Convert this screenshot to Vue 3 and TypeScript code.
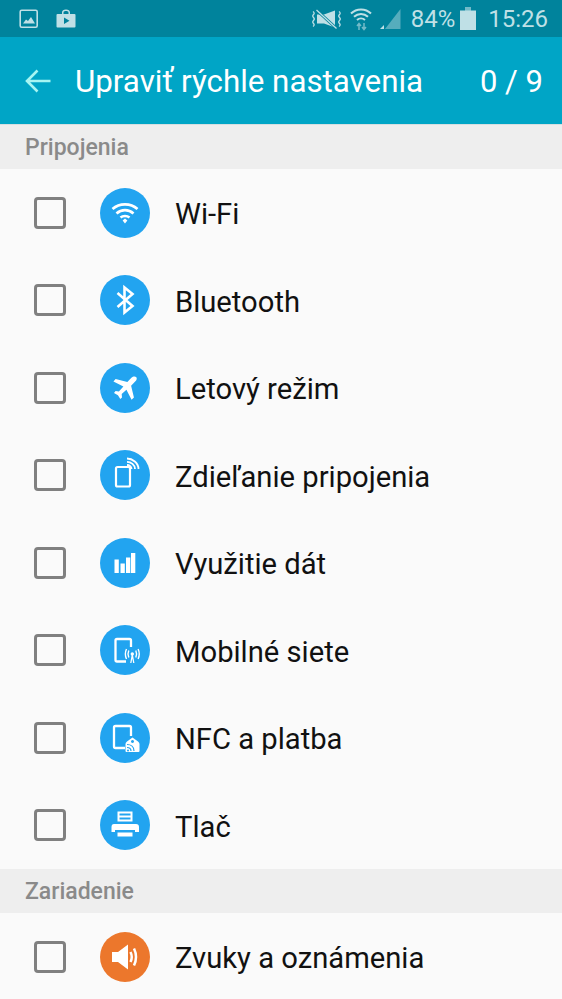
<script setup lang="ts">
interface Row {
  label: string
  icon: string
  orange?: boolean
}

const connections: Row[] = [
  { label: 'Wi-Fi', icon: 'wifi' },
  { label: 'Bluetooth', icon: 'bluetooth' },
  { label: 'Letový režim', icon: 'plane' },
  { label: 'Zdieľanie pripojenia', icon: 'share' },
  { label: 'Využitie dát', icon: 'data' },
  { label: 'Mobilné siete', icon: 'mobile' },
  { label: 'NFC a platba', icon: 'nfc' },
  { label: 'Tlač', icon: 'print' },
]

const device: Row[] = [{ label: 'Zvuky a oznámenia', icon: 'sound', orange: true }]

const sections = [
  { title: 'Pripojenia', rows: connections },
  { title: 'Zariadenie', rows: device },
]
</script>

<template>
  <div class="screen">
    <div class="status-bar">
      <div class="status-left">
        <svg class="st-icon" width="20" height="20" viewBox="0 0 20 20">
          <rect x="1.2" y="1.2" width="17" height="17" rx="1.5" fill="none" stroke="currentColor" stroke-width="1.6" />
          <path d="M4 14.5 L7 10.5 L9 12 L12 8 L16 14.5 Z" fill="currentColor" />
        </svg>
        <svg class="st-icon" width="20" height="20" viewBox="0 0 20 20">
          <path fill-rule="evenodd" d="M1.5 5 H6 V3.5 C6 1.5 7.5 .5 10 .5 C12.500 .5 14 1.500 14 3.500 V5 H18.500 Q19.500 5 19.500 6 V17.500 Q19.500 18.500 18.500 18.500 H1.500 Q.5 18.500 .5 17.500 V6 Q.5 5 1.500 5 Z M7.500 5 H12.500 V3.500 C12.500 2.500 11.500 2 10 2 C8.500 2 7.500 2.500 7.500 3.500 Z M8 8.500 V15 L13.500 11.700 Z" fill="currentColor" />
        </svg>
      </div>
      <div class="status-right">
        <svg class="st-mute" width="30" height="22" viewBox="0 0 30 22">
          <path d="M6 6.500 H13 L24 2.500 V19.500 L13 15.500 H6 Z" fill="currentColor" />
          <path d="M6 2.500 L25 20" stroke="#00839c" stroke-width="3" />
          <path d="M5.500 2 L25.500 20.500" stroke="currentColor" stroke-width="1.300" />
          <path d="M2 3.500 Q4 5 2.500 6.500 Q1 8 2.500 9.500 Q4 11 2.500 12.500 Q1 14 2.500 15.500 Q4 17 2 18.500 M28 3.500 Q30 5 28.500 6.500 Q27 8 28.500 9.500 Q30 11 28.500 12.500 Q27 14 28.500 15.500 Q30 17 28 18.500" fill="none" stroke="currentColor" stroke-width="1.300" />
        </svg>
        <svg class="st-wifi" width="22" height="24" viewBox="0 0 22 24">
          <path d="M1 6.500 C6.500 1 15.500 1 21 6.500 M4 9.800 C8 6 14 6 18 9.800 M7 13 C9.300 11 12.700 11 15 13" fill="none" stroke="currentColor" stroke-width="2" />
          <path d="M9 23 V17 M7 19 L9 16.500 L11 19 M14 16 V22 M12 20 L14 22.500 L16 20" fill="none" stroke="currentColor" stroke-width="1.500" opacity=".6" />
        </svg>
        <svg class="st-signal" width="21" height="22" viewBox="0 0 21 22">
          <path d="M20.500 1 V21 H5 Z" fill="currentColor" opacity=".45" />
          <path d="M0 21 L4 17 V21 Z" fill="currentColor" />
        </svg>
        <span class="st-pct">84%</span>
        <svg class="st-batt" width="16" height="23" viewBox="0 0 16 23">
          <path d="M5 0 H11 V4 H5 Z" fill="currentColor" opacity=".6" />
          <rect y="3.500" width="16" height="19.500" fill="currentColor" />
        </svg>
        <span class="st-time">15:26</span>
      </div>
    </div>

    <header class="app-bar">
      <svg class="back" width="26" height="26" viewBox="0 0 26 26">
        <path d="M25.500 13 H2.500 M12.500 2.500 L2 13 L12.500 23.500" fill="none" stroke="currentColor" stroke-width="2.600" />
      </svg>
      <h1 class="title">Upraviť rýchle nastavenia</h1>
      <span class="count">0 / 9</span>
    </header>

    <section v-for="section in sections" :key="section.title">
      <h2 class="sec-title">{{ section.title }}</h2>
      <div v-for="row in section.rows" :key="row.label" class="row">
        <span class="check" />
        <span class="badge" :class="{ orange: row.orange }">
          <svg width="50" height="50" viewBox="0 0 50 50">
            <g v-if="row.icon === 'wifi'">
              <path d="M12.500 21 C19.500 14.700 30.500 14.700 37.500 21 M16.500 25.500 C21.500 21 28.500 21 33.500 25.500 M20.500 29.500 C23 27.500 27 27.500 29.500 29.500" fill="none" stroke="#fff" stroke-width="2.700" />
              <path d="M22.600 32.500 L25 30.500 L27.400 32.500 L25 35.500 Z" fill="#fff" />
            </g>
            <path v-else-if="row.icon === 'bluetooth'" d="M17.500 18 L32.500 31 L24.500 37.500 V12.500 L32.500 19 L17.500 32" fill="none" stroke="#fff" stroke-width="2.600" />
            <path v-else-if="row.icon === 'plane'" transform="translate(25 25) scale(.94) translate(-25 -25)" d="M37 13.500 C38 14.500 37.500 16.500 35.800 18.200 L31.500 22.500 L34.500 35 L32 37.500 L26.500 26.800 L21.500 31.500 L21.800 35 L20 36.800 L17.500 32.700 L13.300 30.200 L15 28.300 L18.500 28.700 L23.300 23.500 L12.700 18 L15 15.500 L27.500 18.500 L31.800 14.200 C33.500 12.500 36 12.500 37 13.500 Z" fill="#fff" />
            <g v-else-if="row.icon === 'share'">
              <rect x="16" y="17" width="14" height="19.500" rx="1.500" fill="none" stroke="#fff" stroke-width="2.200" />
              <path d="M27 8.500 C32.500 8.500 38.500 13 38.500 19 M27 11.800 C31 11.800 35 15 35 19 M27 15 C29.500 15 31.500 17 31.500 19" fill="none" stroke="#fff" stroke-width="1.800" />
            </g>
            <g v-else-if="row.icon === 'data'" fill="#fff">
              <rect x="14.500" y="21.500" width="4.300" height="13.500" />
              <rect x="20.500" y="25.500" width="4.300" height="9.500" />
              <rect x="26" y="19.500" width="4.300" height="15.500" />
              <rect x="31" y="15" width="4.300" height="20" />
            </g>
            <g v-else-if="row.icon === 'mobile'">
              <path d="M26 36.500 H17 Q15.500 36.500 15.500 35 V15.500 Q15.500 14 17 14 H29.500 Q31 14 31 15.500 V22" fill="none" stroke="#fff" stroke-width="2.300" />
              <circle cx="32.300" cy="29" r="1.700" fill="#fff" />
              <path d="M32.300 30 L30.800 38 M32.300 30 L33.800 38" stroke="#fff" stroke-width="1.300" />
              <path d="M28.800 25.500 Q27.200 29 28.800 32.500 M35.800 25.500 Q37.400 29 35.800 32.500 M26.500 24 Q24.200 29 26.500 34 M38.100 24 Q40.400 29 38.100 34" fill="none" stroke="#fff" stroke-width="1.400" />
            </g>
            <g v-else-if="row.icon === 'nfc'">
              <path d="M25 35 H15.500 Q14 35 14 33.500 V14.500 Q14 13 15.500 13 H29.500 Q31 13 31 14.500 V23" fill="none" stroke="#fff" stroke-width="2.300" />
              <path fill-rule="evenodd" d="M32.500 24.500 L38 28.500 Q39.500 29.500 39.500 31 V38 Q39.500 39 38.500 39 H26.500 Q25.500 39 25.500 38 V31 Q25.500 29.500 27 28.500 Z M32.500 27 A1.500 1.500 0 1 0 32.510 27 Z" fill="#fff" />
              <path d="M27 31.500 C31 31.500 34 34 34 38 M27 34.500 C29.500 34.500 31 36 31 38" fill="none" stroke="#22a4f0" stroke-width="1.200" />
              <circle cx="28" cy="37.500" r="1" fill="#22a4f0" />
            </g>
            <g v-else-if="row.icon === 'print'" fill="#fff">
              <path fill-rule="evenodd" d="M17.500 11.500 H32.500 V21.500 H17.500 Z M19.500 13.500 V15.500 H30.500 V13.500 Z M19.500 17.500 V19.500 H30.500 V17.500 Z" />
              <path d="M14 24 H36 Q39 24 39 27 V32 H35 V30 H15 V32 H11.500 V27 Q11.500 24 14 24 Z" />
              <rect x="17.500" y="32.500" width="15" height="4" />
            </g>
            <g v-else-if="row.icon === 'sound'">
              <path d="M12 20 H18 L28 12.500 V37.500 L18 30 H12 Z" fill="#fff" />
              <path d="M30.500 20 Q33 25 30.500 30" fill="none" stroke="#fff" stroke-width="2.500" />
              <path d="M34 16.500 Q38 25 34 33.500" fill="none" stroke="#fff" stroke-width="2.500" />
            </g>
          </svg>
        </span>
        <span class="label">{{ row.label }}</span>
      </div>
    </section>
  </div>
</template>

<style scoped>
.screen {
  width: 562px;
  height: 999px;
  overflow: hidden;
  background: #fafafa;
  font-family: Roboto, "Liberation Sans", sans-serif;
}

.status-bar {
  height: 37px;
  display: flex;
  justify-content: space-between;
  align-items: center;
  padding: 0 14px 0 19px;
  background: #00839c;
  color: #bfe0e6;
}

.status-left {
  display: flex;
  align-items: center;
  gap: 17px;
}

.status-right {
  display: flex;
  align-items: center;
}

.st-icon,
.st-mute,
.st-wifi,
.st-signal,
.st-batt {
  display: block;
  flex: none;
}

.st-wifi {
  margin-left: 9px;
}

.st-signal {
  margin-left: 8px;
}

.st-pct {
  margin-left: 10px;
  font-size: 24px;
}

.st-batt {
  margin-left: 5px;
}

.st-time {
  margin-left: 12px;
  font-size: 24px;
}

.app-bar {
  height: 88px;
  box-sizing: border-box;
  display: flex;
  align-items: center;
  padding: 0 19px 0 25px;
  background: #00a5c6;
  color: #fff;
  border-bottom: 1px solid #d6dfe1;
}

.back {
  flex: none;
  color: #a6f5f2;
}

.title {
  margin: 0 0 0 24px;
  padding-top: 2px;
  flex: 1;
  font-size: 31.3px;
  font-weight: 400;
}

.count {
  padding-top: 2px;
  font-size: 31px;
}

.sec-title {
  margin: 0;
  height: 44px;
  line-height: 46px;
  padding-left: 25px;
  background: #eeeeee;
  color: #8a8a8a;
  font-size: 23px;
  font-weight: 500;
}

.row {
  height: 87.5px;
  display: flex;
  align-items: center;
  padding-left: 34px;
}

.check {
  flex: none;
  width: 32px;
  height: 32px;
  box-sizing: border-box;
  border: 3px solid #808080;
  border-radius: 4px;
}

.badge {
  flex: none;
  width: 50px;
  height: 50px;
  margin-left: 34px;
  border-radius: 50%;
  background: #22a4f0;
}

.badge svg {
  display: block;
}

.badge.orange {
  background: #ec772c;
}

.label {
  margin-left: 25px;
  padding-top: 3px;
  font-size: 29.2px;
  color: #111;
}
</style>

<style>
body {
  background: #fafafa;
}
</style>
